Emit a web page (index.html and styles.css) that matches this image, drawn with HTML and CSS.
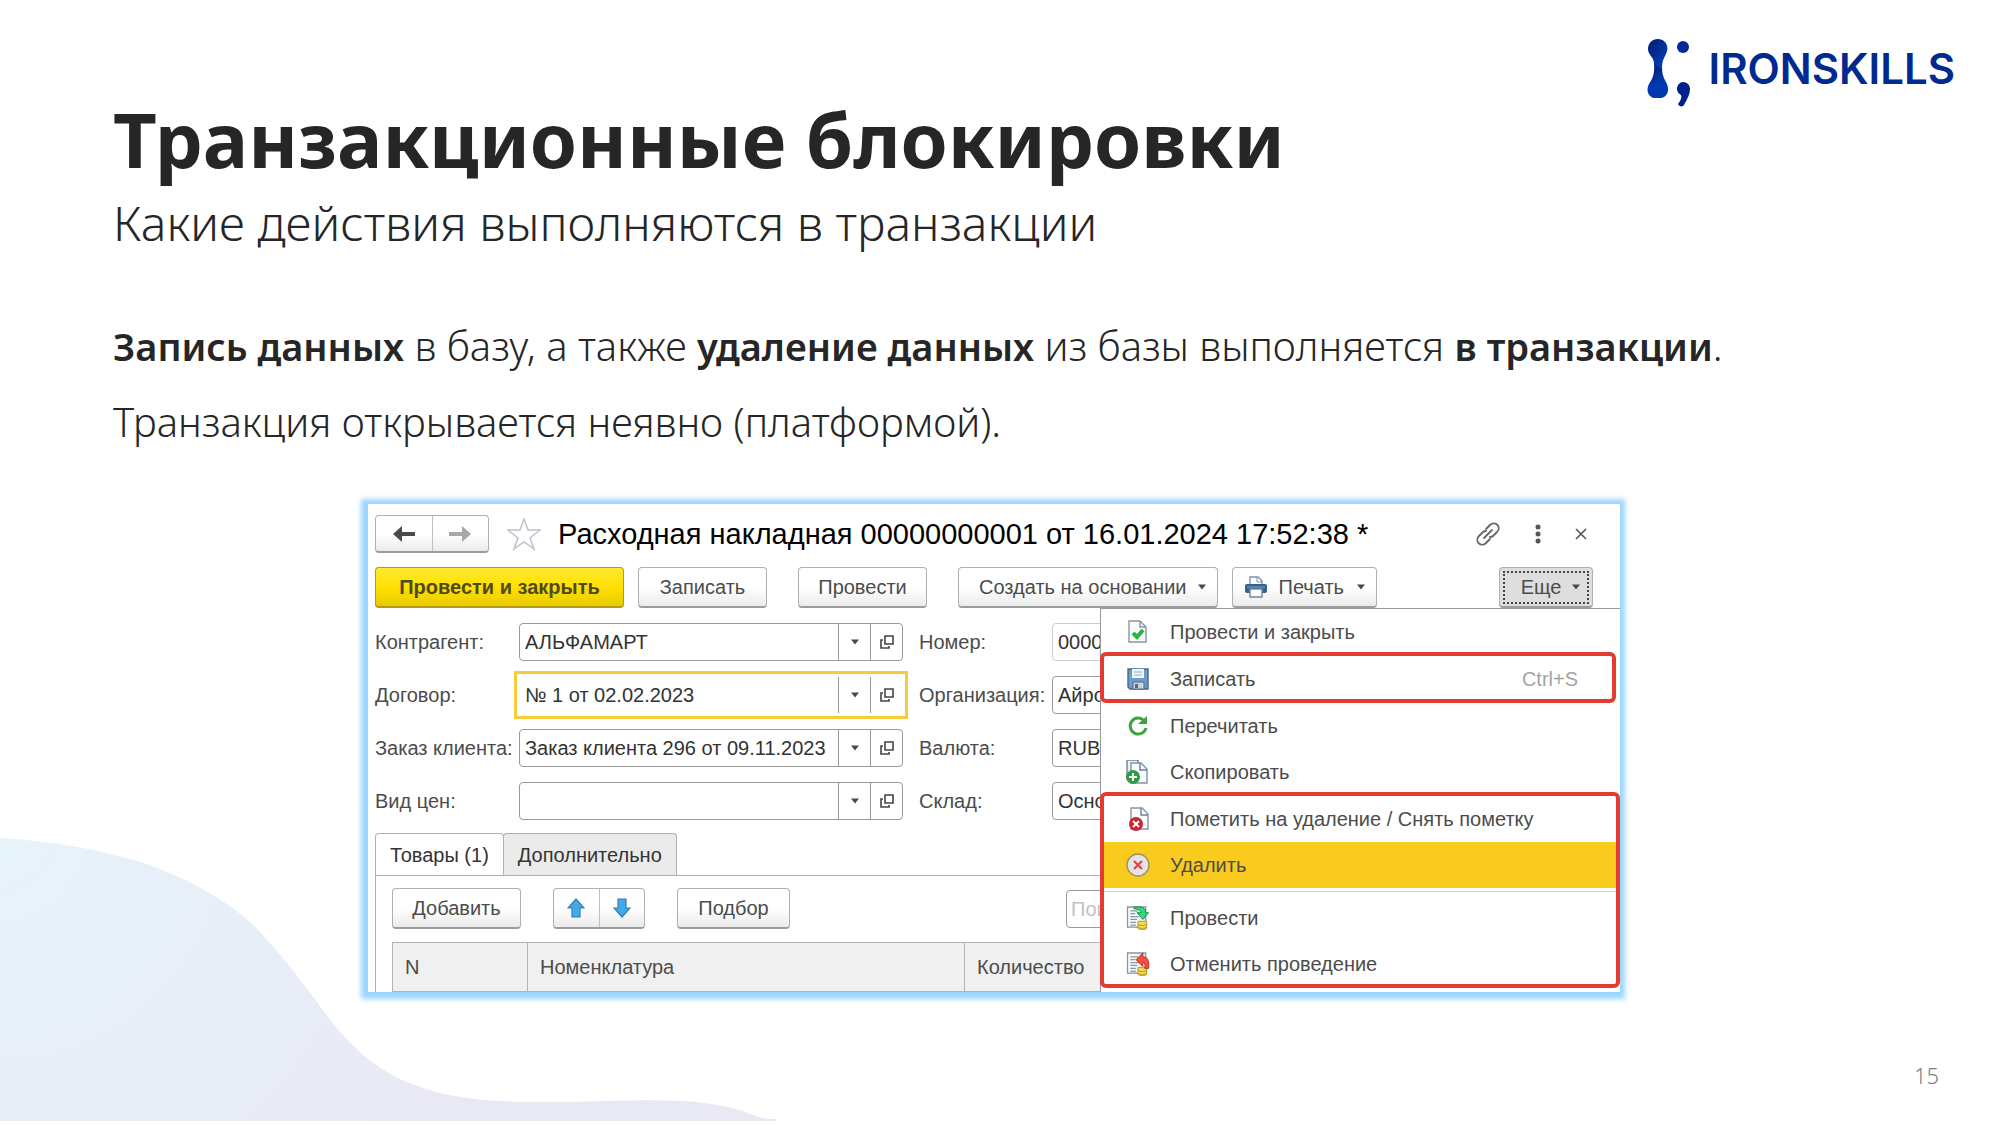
FILE: index.html
```html
<!DOCTYPE html>
<html lang="ru">
<head>
<meta charset="utf-8">
<title>Транзакционные блокировки</title>
<link rel="stylesheet" href="styles.css">
</head>
<body>
<svg width="0" height="0" class="defs" aria-hidden="true">
  <defs>
    <symbol id="i-open" viewBox="0 0 16 16"><path d="M6 2h8v8H6zM4 6H2v8h8v-2" fill="none" stroke="#444" stroke-width="1.6"/></symbol>
    <symbol id="i-caret" viewBox="0 0 10 6"><path d="M1 0.500h8L5 5.500z" fill="#4a4a4a"/></symbol>
    <symbol id="i-coins" viewBox="0 0 24 25"><path d="M1 1h19v21H1z" fill="#f4f6f8" stroke="#8795a5" stroke-width="1.400"/><path d="M4 5h8M4 8h5M4 11h9M4 14h7M4 17h6M4 20h6" stroke="#9099a3" stroke-width="1.200"/><path d="M12 16v7c0 2.200 9 2.200 9 0v-7z" fill="#f5dc4e" stroke="#b9982a" stroke-width="1"/><path d="M12 19c1 1.800 8 1.800 9 0M12 22c1 1.800 8 1.800 9 0" fill="none" stroke="#b9982a"/></symbol>
  </defs>
</svg>
<div class="slide">
  <svg class="wave" viewBox="0 0 776 286" aria-hidden="true">
    <defs><radialGradient id="wg" gradientUnits="userSpaceOnUse" cx="0" cy="0" r="520"><stop offset="0" stop-color="#e6f4f8"/><stop offset=".2" stop-color="#e7f1f9"/><stop offset=".5" stop-color="#e7eef8"/><stop offset="1" stop-color="#e9e9f5"/></radialGradient></defs>
    <path fill="url(#wg)" d="M0 3C50 6 100 14 147 29C192 46 230 67 255 92C278 115 298 142 317 167C343 203 364 226 400 244C443 264 490 267 540 267C600 267 640 264 685 266C710 268 732 272 748 278C757 282 762 284 776 284V286H0z"/>
  </svg>
  <header class="brand">
    <svg class="brand-mark" viewBox="0 0 44 70" aria-hidden="true">
      <defs>
        <linearGradient id="b1" x1="0" y1="0" x2="1" y2="1"><stop offset=".2" stop-color="#00237f"/><stop offset="1" stop-color="#0a45c4"/></linearGradient>
        <linearGradient id="b2" x1="0" y1="0" x2=".3" y2="1"><stop offset="0" stop-color="#001a6e"/><stop offset=".7" stop-color="#0038b0"/></linearGradient>
      </defs>
      <path fill="url(#b2)" d="M7 25C8 37 5 41 2 46C-2 54 3 60 8 60h6C19 60 24 53 19 44C16 39 15 35 15 29z"/>
      <path fill="url(#b1)" d="M11 1C3 1 -1 9 2 15C5 20 7 21 7 26L15 31C15 23 17 20 19 16C23 8 18 1 11 1z"/>
      <circle cx="36" cy="9" r="6" fill="#002a96"/>
      <path fill="#00208c" d="M36 44c4 0 7 3 7 7c0 6-4 12-6 16c-1 2-5 2-6-1c3-4 4-7 3-9c-2-1-4-3-4-6c0-4 3-7 6-7z"/>
    </svg>
    <span class="brand-name">IRONSKILLS</span>
  </header>
  <main class="content">
    <h1>Транзакционные блокировки</h1>
    <p class="subtitle">Какие действия выполняются в транзакции</p>
    <div class="body-text">
      <p><b>Запись данных</b> в базу, а также <b>удаление данных</b> из базы выполняется <b>в транзакции</b>.</p>
      <p>Транзакция открывается неявно (платформой).</p>
    </div>
    <section class="window" aria-label="Расходная накладная">
      <div class="titlebar">
        <div class="split nav">
          <button type="button" aria-label="Назад"><svg width="22" height="18" viewBox="0 0 22 18"><path d="M0 9L9 1v6h13v4H9v6z" fill="#4a4a4a"/></svg></button>
          <button type="button" aria-label="Вперед"><svg width="22" height="18" viewBox="0 0 22 18"><path d="M22 9L13 1v6H0v4h13v6z" fill="#a8a8a8"/></svg></button>
        </div>
        <svg class="star" viewBox="0 0 36 34"><path d="M18 2l4 11h12l-10 8 4 11-10-7-10 7 4-11L2 13h12z" fill="#fff" stroke="#bcc3cc" stroke-width="1.500"/></svg>
        <h2>Расходная накладная 00000000001 от 16.01.2024 17:52:38 *</h2>
        <div class="tools">
          <button type="button" aria-label="Ссылка"><svg width="26" height="26" viewBox="0 0 26 26"><g fill="none" stroke="#666" stroke-width="1.800" stroke-linecap="round"><path d="M11 8l4-4c5-5 12 2 7 7l-4 4c-1 1-2 1-3 1"/><path d="M15 18l-4 4c-5 5-12-2-7-7l4-4c1-1 2-1 3-1"/><path d="M9 17l8-8"/></g></svg></button>
          <button type="button" aria-label="Меню"><svg width="6" height="20" viewBox="0 0 6 20"><g fill="#555"><circle cx="3" cy="3" r="2.500"/><circle cx="3" cy="10" r="2.500"/><circle cx="3" cy="17" r="2.500"/></g></svg></button>
          <button type="button" aria-label="Закрыть"><svg width="12" height="12" viewBox="0 0 12 12"><path d="M1 1l10 10M11 1L1 11" stroke="#555" stroke-width="1.600"/></svg></button>
        </div>
      </div>
      <div class="commands">
        <button type="button" class="btn primary">Провести и закрыть</button>
        <button type="button" class="btn">Записать</button>
        <button type="button" class="btn wide-gap">Провести</button>
        <button type="button" class="btn wide-gap has-caret">Создать на основании<svg class="caret"><use href="#i-caret"/></svg></button>
        <button type="button" class="btn print has-caret"><svg width="22" height="22" viewBox="0 0 22 22"><path d="M5 8V1h8l4 4v3" fill="#fff" stroke="#7d93a8" stroke-width="1.400"/><path d="M12 1v5h5" fill="none" stroke="#7d93a8"/><rect y="8" width="22" height="9" rx="2" fill="#336390"/><path d="M2 11h18" stroke="#7fa3c3"/><path d="M5 13h12v8H5z" fill="#fff" stroke="#6d89a3" stroke-width="1.400"/></svg>Печать<svg class="caret"><use href="#i-caret"/></svg></button>
        <button type="button" class="btn more has-caret" aria-expanded="true">Еще<svg class="caret"><use href="#i-caret"/></svg></button>
      </div>
      <div class="form">
        <label for="f1">Контрагент:</label>
        <div class="field"><input id="f1" value="АЛЬФАМАРТ"><button type="button" aria-label="Список"><svg class="caret"><use href="#i-caret"/></svg></button><button type="button" aria-label="Открыть"><svg class="open"><use href="#i-open"/></svg></button></div>
        <label for="g1" class="second">Номер:</label>
        <div class="field muted"><input id="g1" value="00000000001"></div>

        <label for="f2">Договор:</label>
        <div class="field active"><input id="f2" value="№ 1 от 02.02.2023"><button type="button" aria-label="Список"><svg class="caret"><use href="#i-caret"/></svg></button><button type="button" aria-label="Открыть"><svg class="open"><use href="#i-open"/></svg></button></div>
        <label for="g2" class="second">Организация:</label>
        <div class="field"><input id="g2" value="Айронскиллс"></div>

        <label for="f3">Заказ клиента:</label>
        <div class="field"><input id="f3" value="Заказ клиента 296 от 09.11.2023"><button type="button" aria-label="Список"><svg class="caret"><use href="#i-caret"/></svg></button><button type="button" aria-label="Открыть"><svg class="open"><use href="#i-open"/></svg></button></div>
        <label for="g3" class="second">Валюта:</label>
        <div class="field"><input id="g3" value="RUB"></div>

        <label for="f4">Вид цен:</label>
        <div class="field"><input id="f4" value=""><button type="button" aria-label="Список"><svg class="caret"><use href="#i-caret"/></svg></button><button type="button" aria-label="Открыть"><svg class="open"><use href="#i-open"/></svg></button></div>
        <label for="g4" class="second">Склад:</label>
        <div class="field"><input id="g4" value="Основной"></div>
      </div>
      <div class="tabs">
        <button type="button" class="tab current">Товары (1)</button>
        <button type="button" class="tab">Дополнительно</button>
      </div>
      <div class="pane">
        <div class="pane-tools">
          <button type="button" class="btn add">Добавить</button>
          <div class="split move">
            <button type="button" aria-label="Вверх"><svg width="18" height="20" viewBox="0 0 18 20"><path d="M9 1l8 9h-4v9H5v-9H1z" fill="#41aaea" stroke="#2f7fae" stroke-width="1.200"/></svg></button>
            <button type="button" aria-label="Вниз"><svg width="18" height="20" viewBox="0 0 18 20"><path d="M9 19l8-9h-4V1H5v9H1z" fill="#41aaea" stroke="#2f7fae" stroke-width="1.200"/></svg></button>
          </div>
          <button type="button" class="btn">Подбор</button>
          <input class="search" placeholder="Поиск" aria-label="Поиск">
        </div>
        <table class="goods">
          <thead><tr><th class="c-n">N</th><th class="c-name">Номенклатура</th><th>Количество</th></tr></thead>
        </table>
      </div>
      <div class="menu" role="menu">
        <div class="group">
          <button type="button" role="menuitem"><svg viewBox="0 0 24 24"><path d="M3 1h11l6 6v15H3z" fill="#fafbfc" stroke="#8795a5" stroke-width="1.400"/><path d="M14 1v6h6" fill="none" stroke="#8795a5" stroke-width="1.400"/><path d="M7 13l4 4 6-7" fill="none" stroke="#2db43c" stroke-width="4"/></svg>Провести и закрыть</button>
        </div>
        <div class="group marked short">
          <button type="button" role="menuitem"><svg viewBox="0 0 24 24"><path d="M2 2h20v20H4l-2-2z" fill="#6d9bcd" stroke="#42698f" stroke-width="1.400"/><path d="M6 2h12v9H6z" fill="#f3f7fa"/><path d="M8 5h8M8 8h8" stroke="#93a9bf"/><path d="M7 15h11v7H7z" fill="#cbd3da" stroke="#53697f"/><path d="M9 17h3v4H9z" fill="#53697f"/></svg>Записать<kbd>Ctrl+S</kbd></button>
        </div>
        <div class="group">
          <button type="button" role="menuitem"><svg viewBox="0 0 24 24"><path d="M18 6.500A8 8 0 1 0 20 14" fill="none" stroke="#39a53c" stroke-width="3"/><path d="M21 2v8h-9z" fill="#39a53c"/></svg>Перечитать</button>
          <button type="button" role="menuitem"><svg viewBox="0 0 24 24"><path d="M1 0h11v18H1z" fill="#eef2f5" stroke="#6f8296" stroke-width="1.400"/><path d="M5 3h10l6 6v14H5z" fill="#fafbfc" stroke="#8192a3" stroke-width="1.400"/><path d="M14 3v7h7" fill="none" stroke="#6f8296" stroke-width="1.400"/><circle cx="7" cy="17" r="7" fill="#2f9c46"/><path d="M7 13v8M3 17h8" stroke="#fff" stroke-width="2"/></svg>Скопировать</button>
        </div>
        <div class="group marked">
          <button type="button" role="menuitem"><svg viewBox="0 0 24 24"><path d="M5 1h11l6 6v15H5z" fill="#fafbfc" stroke="#8795a5" stroke-width="1.400"/><path d="M15 1v7h7" fill="none" stroke="#6f8296" stroke-width="1.400"/><circle cx="10" cy="17" r="7" fill="#c9262d"/><path d="M7 14l6 6M13 14l-6 6" stroke="#fff" stroke-width="2"/></svg>Пометить на удаление / Снять пометку</button>
          <button type="button" role="menuitem" class="hot"><svg viewBox="0 0 24 24"><circle cx="12" cy="12" r="11" fill="#e4e4e4" stroke="#a5925a" stroke-width="1.400"/><path d="M8 8l8 8M16 8l-8 8" stroke="#e83a48" stroke-width="2"/></svg>Удалить</button>
          <hr>
          <button type="button" role="menuitem"><svg viewBox="0 0 24 25"><use href="#i-coins" width="24" height="25"/><path d="M8 1h6c4 0 6 3 6 6h3l-6 7-6-7h4c0-2-2-4-7-4z" fill="#2ddb7c" stroke="#14894b"/></svg>Провести</button>
          <button type="button" role="menuitem"><svg viewBox="0 0 24 25"><use href="#i-coins" width="24" height="25"/><path d="M10 8l7-7v4c5 0 7 4 6 12h-4c1-4 0-6-2-6v4z" fill="#f4503f" stroke="#b8261e"/></svg>Отменить проведение</button>
        </div>
      </div>
    </section>
  </main>
  <footer class="page-number">15</footer>
</div>
</body>
</html>
```
FILE: styles.css
```css
* { box-sizing: border-box; }

body {
  margin: 0;
  background: #fff;
  color: #262626;
  font-family: "Noto Sans", "Open Sans", sans-serif;
}

.defs { position: absolute; }

.slide {
  position: relative;
  min-height: 100vh;
  display: flex;
  flex-direction: column;
  overflow: hidden;
}

.wave {
  position: absolute;
  left: 0;
  bottom: 4px;
  width: 776px;
}

/* Brand */
.brand {
  display: flex;
  justify-content: flex-end;
  align-items: flex-start;
  gap: 18px;
  height: 88px;
  padding: 38px 45px 0 0;
}
.brand-mark { width: 44px; height: 70px; flex: none; }
.brand-name {
  font: 600 42px/62px Inter, sans-serif;
  color: #002a8f;
}

/* Slide text */
.content {
  position: relative;
  padding: 0 125px 0 113px;
}
h1 {
  margin: 0;
  font-size: 76px;
  line-height: 102px;
  font-weight: 700;
}
.subtitle {
  margin: 0;
  font-size: 48px;
  line-height: 66px;
  font-weight: 300;
}
.body-text {
  margin-top: 52px;
  font-size: 40px;
  line-height: 75px;
  font-weight: 300;
}
.body-text p { margin: 0; }
.body-text b { font-size: 38px; font-weight: 600; }

/* Application window */
.window {
  position: relative;
  max-width: 1252px;
  margin: 45px auto 0;
  padding: 11px 0 0 7px;
  overflow: hidden;
  background: #fff;
  box-shadow: -1px 1px 5px 6px #9cd5ff;
  font: 20px/24px "Liberation Sans", Arial, sans-serif;
  color: #4c4c4c;
  height: 488px;
}
.window button,
.window input {
  font: inherit;
  color: inherit;
  margin: 0;
}
.window svg { flex: none; }

.titlebar {
  display: flex;
  align-items: center;
  height: 38px;
}
.titlebar h2 {
  margin: 0 0 0 16px;
  font-size: 29px;
  line-height: 36px;
  font-weight: 400;
  color: #000;
  white-space: nowrap;
}
.star { width: 36px; height: 34px; margin-left: 17px; }
.tools {
  display: flex;
  align-items: center;
  justify-content: space-between;
  width: 112px;
  margin: 0 33px 0 auto;
}
.tools button {
  display: flex;
  padding: 0;
  border: 0;
  background: none;
}

.btn,
.split {
  height: 41px;
  border: 1px solid #b0b0b0;
  border-bottom: 2px solid #9c9c9c;
  border-radius: 4px;
  background: linear-gradient(#fff 50%, #ebebeb);
}
.btn {
  display: flex;
  align-items: center;
  justify-content: center;
  padding: 0 18px;
  white-space: nowrap;
}
.split { display: flex; }
.split button {
  flex: 1;
  display: flex;
  align-items: center;
  justify-content: center;
  padding: 0;
  border: 0;
  background: none;
}
.split button + button { border-left: 1px solid #c0c0c0; }
.nav { width: 114px; height: 38px; }

.caret { width: 10px; height: 6px; }

.commands {
  display: flex;
  gap: 14px;
  margin-top: 14px;
  padding-right: 27px;
}
.commands .btn { min-width: 129px; }
.commands .wide-gap { margin-left: 17px; }
.commands .primary {
  width: 249px;
  border-color: #b39c12;
  background: linear-gradient(#ffe933, #ffe000 50%, #e8cb00);
  font-weight: 700;
  color: #4f4a1c;
}
.commands .has-caret { min-width: 140px; gap: 10px; padding: 0 10px 0 20px; }
.commands .print { padding: 0 10px 0 12px; gap: 12px; }
.commands .more {
  min-width: 94px;
  margin-left: auto;
  background: #dedede;
  outline: 2px dotted #444;
  outline-offset: -6px;
}

.form {
  display: grid;
  grid-template-columns: 144px 384px 149px 1fr;
  row-gap: 15px;
  align-items: center;
  margin-top: 15px;
}
.second { padding-left: 16px; }
.form label { white-space: nowrap; }
.field {
  display: flex;
  height: 38px;
  border: 1px solid #999;
  border-radius: 4px;
  background: #fff;
}
.field.muted { border-color: #ccc; }
.field input {
  flex: 1;
  min-width: 0;
  padding: 0 5px;
  border: 0;
  outline: 0;
  background: none;
  color: #333;
}
.field button {
  display: flex;
  align-items: center;
  justify-content: center;
  width: 32px;
  padding: 0;
  border: 0;
  border-left: 1px solid #999;
  background: none;
}
.field.active {
  border-color: transparent;
  border-radius: 0;
  outline: 3px solid #f5cc3a;
  outline-offset: 2px;
}
.open { width: 16px; height: 16px; }

.tabs {
  display: flex;
  margin-top: 13px;
  border-bottom: 1px solid #b0b0b0;
}
.tab {
  height: 42px;
  padding: 0 14px;
  border: 1px solid #b0b0b0;
  border-bottom: 0;
  border-radius: 4px 4px 0 0;
  background: #ebebeb;
  white-space: nowrap;
}
.window .tab { color: #333; }
.tab.current {
  margin: 0 -1px -1px 0;
  background: #fff;
}
.pane {
  padding: 12px 0 0 16px;
  border-left: 1px solid #b0b0b0;
}
.pane-tools { display: flex; }
.pane-tools .btn { min-width: 113px; }
.pane-tools .add { min-width: 129px; }
.move { width: 92px; margin: 0 32px; }
.search {
  width: 160px;
  height: 38px;
  border: 1px solid #999;
  border-radius: 4px;
  background: #fff;
}
.pane-tools .search { margin: 2px 0 0 276px; padding: 0 4px; }
.search::placeholder { color: #c4bfc4; opacity: 1; }

.goods {
  width: 100%;
  margin-top: 13px;
  border-collapse: collapse;
  table-layout: fixed;
}
.goods th {
  height: 49px;
  padding: 0 12px;
  border: 1px solid #b4b4b4;
  background: #f0f0f0;
  font-weight: 400;
  text-align: left;
}
.c-n { width: 135px; }
.c-name { width: 437px; }

/* Drop-down menu over the form */
.menu {
  position: absolute;
  top: 104px;
  right: 0;
  bottom: 0;
  width: 520px;
  display: flex;
  flex-direction: column;
  gap: 1px;
  border-top: 1px solid #999;
  border-left: 1px solid #999;
  background: #fff;
}
.group { position: relative; }
.menu button {
  display: flex;
  align-items: center;
  gap: 20px;
  width: 100%;
  height: 46px;
  padding: 0 42px 0 25px;
  border: 0;
  background: none;
  white-space: nowrap;
  text-align: left;
}
.menu svg { width: 24px; height: 24px; }
.menu kbd {
  margin-left: auto;
  font: inherit;
  color: #a3a3a3;
}
.menu .hot { background: #f9cb1f; }
.menu hr {
  margin: 3px 0;
  border: 0;
  border-top: 1px solid #d8d2c0;
}
.marked::after {
  content: "";
  position: absolute;
  inset: -4px 0 -1px -1px;
  border: 4px solid #e23c32;
  border-radius: 6px;
  pointer-events: none;
}
.marked.short::after { right: 4px; }

.page-number {
  position: absolute;
  right: 61px;
  bottom: 34px;
  font-size: 22px;
  line-height: 32px;
  font-weight: 300;
  color: #7f7f7f;
}
```
